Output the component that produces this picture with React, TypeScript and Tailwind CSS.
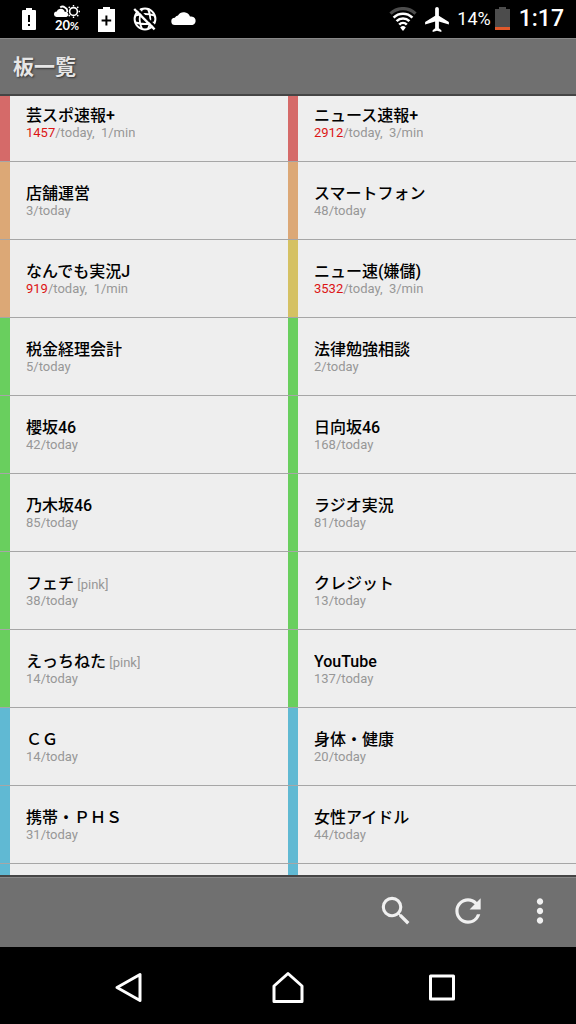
import { MdMoreVert, MdRefresh, MdSearch } from 'react-icons/md'

type Board = {
  name: string
  tag?: string
  today: number
  perMin?: number
  color: string
}

const RED = 'bg-[#d56a69]'
const ORANGE = 'bg-[#dca876]'
const YELLOW = 'bg-[#d5c163]'
const GREEN = 'bg-[#69cf5e]'
const BLUE = 'bg-[#60b9d3]'

const BOARDS: Board[] = [
  { name: '芸スポ速報+',    today: 1457, perMin: 1, color: RED },
  { name: 'ニュース速報+',  today: 2912, perMin: 3, color: RED },
  { name: '店舗運営',       today: 3,    color: ORANGE },
  { name: 'スマートフォン', today: 48,   color: ORANGE },
  { name: 'なんでも実況J',  today: 919,  perMin: 1, color: ORANGE },
  { name: 'ニュー速(嫌儲)', today: 3532, perMin: 3, color: YELLOW },
  { name: '税金経理会計',   today: 5,    color: GREEN },
  { name: '法律勉強相談',   today: 2,    color: GREEN },
  { name: '櫻坂46',         today: 42,   color: GREEN },
  { name: '日向坂46',       today: 168,  color: GREEN },
  { name: '乃木坂46',       today: 85,   color: GREEN },
  { name: 'ラジオ実況',     today: 81,   color: GREEN },
  { name: 'フェチ',         tag: 'pink', today: 38, color: GREEN },
  { name: 'クレジット',     today: 13,   color: GREEN },
  { name: 'えっちねた',     tag: 'pink', today: 14, color: GREEN },
  { name: 'YouTube',        today: 137,  color: GREEN },
  { name: '\uff23\uff27',   today: 14,   color: BLUE },
  { name: '身体・健康',     today: 20,   color: BLUE },
  { name: '携帯・\uff30\uff28\uff33', today: 31, color: BLUE },
  { name: '女性アイドル',   today: 44,   color: BLUE },
]

function StatusBar() {
  return (
    <div className="flex h-[38px] shrink-0 items-center justify-between bg-black pr-3 pl-[22px] text-white">
      <div className="flex items-center gap-[18px]">
        {/* low battery */}
        <svg width="14" height="24" viewBox="0 0 14 24" fill="currentColor">
          <path fillRule="evenodd" d="M4 1h6v2h3q1 0 1 1v18q0 1-1 1H1q-1 0-1-1V4q0-1 1-1h3zM6 8v7h2V8zM6 17v2h2v-2z" />
        </svg>
        {/* weather */}
        <div className="flex w-[26px] flex-col items-center">
          <svg width="26" height="13" viewBox="0 0 26 13" fill="none">
            <circle cx="19.500" cy="6.500" r="3.900" stroke="currentColor" strokeWidth="1.600" />
            <path d="M19.500 0v1.500M19.500 11.500V13M24.300 1.700l-1.200 1.200M24.300 11.300l-1.200-1.200M26 6.500h-1.400M14.700 1.700l1.200 1.200M14.700 11.300l1.200-1.200" stroke="currentColor" strokeWidth="1.400" />
            <path d="M2.600 12A2.700 2.700 0 0 1 2.800 6.600 3.400 3.400 0 0 1 5.600 4a3.800 3.800 0 0 1 5.200 3 2.500 2.500 0 0 1 1.600 5z" fill="currentColor" />
            <path d="M6.200 2.400A3.800 3.800 0 0 1 11 2.600 3.600 3.600 0 0 1 13 7" stroke="currentColor" strokeWidth="1.800" />
          </svg>
          <span className="font-[Lato] text-[13px] leading-[14px] font-bold">20<span className="text-[11px]">%</span></span>
        </div>
        {/* power saving */}
        <svg width="17" height="26" viewBox="0 0 17 26" fill="currentColor">
          <path fillRule="evenodd" d="M5 1h7v2h5v23H0V3h5zM7.400 9.500v4H3.600v2h3.800v4h2v-4h3.800v-2H9.400v-4z" />
        </svg>
        {/* no network */}
        <svg width="24" height="24" viewBox="0 0 24 24" fill="none" stroke="currentColor" strokeWidth="2">
          <circle cx="12" cy="12" r="10.400" />
          <path d="M9 2C6 8 6 16 9 22M15 2c3 6 3 14 0 20M2.500 8.500Q12 5.500 21.500 8.500M2.500 15.500Q12 18.500 21.500 15.500" />
          <path d="M3.600 1 23 20.400" stroke="#000" strokeWidth="2.400" />
          <path d="M1.200 2 21.600 22.400" strokeWidth="2.400" />
        </svg>
        <svg className="-ml-1" width="26" height="16" viewBox="0 0 26 16" fill="currentColor">
          <path d="M4 14a3.600 3.600 0 0 1-.2-7.200A4.400 4.400 0 0 1 7 4.400 6.800 6.800 0 0 1 19 5.600 4.300 4.300 0 0 1 21.500 14z" />
        </svg>
      </div>

      <div className="flex items-center gap-2">
        {/* wifi, outer band is dim */}
        <svg width="28" height="24" viewBox="0 0 28 24" fill="none" strokeWidth="2.600">
          <path d="M1.500 6.600a18 18 0 0 1 25 0" stroke="#4c4c4c" strokeWidth="3.200" />
          <path d="M4.600 10.600a13.400 13.400 0 0 1 18.800 0M7.600 14.200a9 9 0 0 1 12.800 0M10.200 17.600a5.400 5.400 0 0 1 7.600 0" stroke="currentColor" />
          <path d="M14 24l-2.800-3.600a4 4 0 0 1 5.600 0z" fill="currentColor" />
        </svg>
        <svg width="24" height="25" viewBox="2 2 19 20" fill="currentColor">
          <path d="M21 16v-2l-8-5V3.500c0-.83-.67-1.500-1.500-1.500S10 2.670 10 3.500V9l-8 5v2l8-2.500V19l-2 1.500V22l3.500-1 3.500 1v-1.500L13 19v-5.500l8 2.500z" />
        </svg>
        <div className="flex items-center gap-1">
          <span className="text-lg leading-6">14%</span>
          <svg width="16" height="24" viewBox="0 0 16 24">
            <path d="M4 0h7v2h4v18H0V2h4z" fill="#4c4c4c" />
            <path d="M0 20h15v3H0z" fill="#e0592b" />
          </svg>
        </div>
        <span className="text-[23px] leading-6 font-medium">1:17</span>
      </div>
    </div>
  )
}

function BoardCell({ board }: { board: Board }) {
  const hot = board.today >= 500

  return (
    <li className="min-w-0 border-b border-[#a6a6a6]">
      <a href="#" className="flex h-[77px]">
        <span className={`w-[10px] shrink-0 ${board.color}`} />
        <div className="min-w-0 pt-[23px] pl-4">
          <p className="h-[18px] truncate text-base leading-[18px] font-medium text-black">
            {board.name}
            {board.tag && <span className="text-[13px] leading-none font-normal text-[#979797]"> [{board.tag}]</span>}
          </p>
          <p className="truncate text-[13px] leading-4 text-[#979797]">
            <span className={hot ? 'text-[#dc1414]' : ''}>{board.today}</span>/today
            {board.perMin && <>,&nbsp; {board.perMin}/min</>}
          </p>
        </div>
      </a>
    </li>
  )
}

export default function App() {
  return (
    <div className="flex h-screen flex-col overflow-hidden bg-black font-['Roboto','Noto_Sans_CJK_JP',sans-serif]">
      <StatusBar />

      <header className="flex h-[58px] shrink-0 items-center border-t border-b-2 border-t-[#888] border-b-[#454545] bg-[#707070] px-[13px]">
        <h1 className="text-[21px] leading-7 font-bold text-[#e6e6e6] [text-shadow:1px_1px_2px_#333]">板一覧</h1>
      </header>

      {/* Board list, scrolled slightly past the first row */}
      <main className="min-h-0 flex-1 overflow-hidden bg-[#eee]">
        <ul className="-mt-3 grid grid-cols-2">
          {BOARDS.map(board => <BoardCell key={board.name} board={board} />)}
          <li className={`h-[78px] w-[10px] ${BLUE}`} />
          <li className={`h-[78px] w-[10px] ${BLUE}`} />
        </ul>
      </main>

      {/* Toolbar */}
      <div className="shrink-0 border-t-2 border-[#454545]">
        <div className="flex h-[70px] justify-end border-t border-[#888] bg-[#707070] pb-1 text-[#f0f0f0]">
          <button aria-label="検索" className="flex w-[72px] items-center justify-center">
            <MdSearch size={38} />
          </button>
          <button aria-label="更新" className="flex w-[72px] items-center justify-center">
            <MdRefresh size={38} />
          </button>
          <button aria-label="メニュー" className="flex w-[72px] items-center justify-center">
            <MdMoreVert size={38} />
          </button>
        </div>
      </div>

      <nav className="grid h-[77px] shrink-0 grid-cols-3 bg-black px-[54px] pt-1 text-white">
        <button aria-label="戻る" className="flex items-center justify-center">
          <svg width="40" height="40" viewBox="0 0 40 40" fill="none" stroke="currentColor" strokeWidth="3" strokeLinejoin="round">
            <path d="M28 6.500v26L5 19.500z" />
          </svg>
        </button>
        <button aria-label="ホーム" className="flex items-center justify-center">
          <svg width="40" height="40" viewBox="0 0 40 40" fill="none" stroke="currentColor" strokeWidth="3" strokeLinejoin="round">
            <path d="M20 5.500 34 18v15.500H6V18z" />
          </svg>
        </button>
        <button aria-label="履歴" className="flex items-center justify-center">
          <svg width="40" height="40" viewBox="0 0 40 40" fill="none" stroke="currentColor" strokeWidth="3" strokeLinejoin="round">
            <path d="M6.500 8h23v23h-23z" />
          </svg>
        </button>
      </nav>
    </div>
  )
}
